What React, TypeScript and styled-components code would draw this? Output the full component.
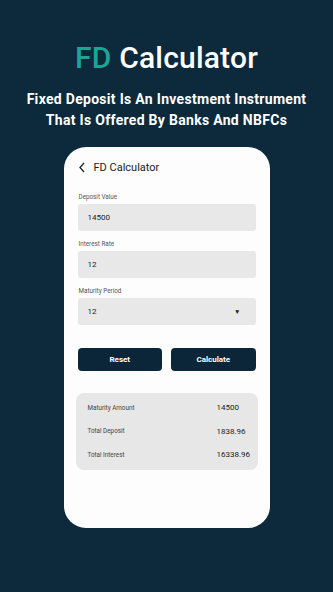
import styled, { createGlobalStyle } from "styled-components";

const GlobalStyle = createGlobalStyle`
  html, body {
    margin: 0;
    padding: 0;
    background: #0c2a3b;
  }
  * {
    box-sizing: border-box;
  }
`;

const Page = styled.div`
  width: 333px;
  height: 592px;
  background: #0c2a3b;
  font-family: Roboto, "Liberation Sans", sans-serif;
  display: flex;
  flex-direction: column;
  align-items: center;
  padding-top: 40px;
  overflow: hidden;
`;

const Title = styled.h1`
  margin: 0;
  font-size: 30px;
  font-weight: 500;
  line-height: 36px;
  color: #ffffff;
  letter-spacing: 0.2px;

  span {
    color: #1ba597;
  }
`;

const Subtitle = styled.p`
  margin: 13px 0 0;
  font-size: 14px;
  font-weight: 700;
  line-height: 21px;
  color: #ffffff;
  text-align: center;
  letter-spacing: 0.3px;
`;

const Phone = styled.div`
  margin-top: 16px;
  width: 206px;
  height: 381px;
  background: #fdfdfd;
  border-radius: 22px;
  padding: 12px 14px 0 14px;
  display: flex;
  flex-direction: column;
`;

const Header = styled.div`
  display: flex;
  align-items: center;
  gap: 8px;
  height: 16px;
  color: #222;
  font-size: 11px;
  margin-bottom: 18px;
`;

const Field = styled.div`
  display: flex;
  flex-direction: column;
  margin-bottom: 9px;
`;

const Label = styled.span`
  font-size: 6.3px;
  color: #555;
  margin-left: 1px;
  line-height: 9px;
  margin-bottom: 2px;
`;

const InputBox = styled.div`
  height: 27px;
  background: #e8e8e8;
  border-radius: 3px;
  display: flex;
  align-items: center;
  justify-content: space-between;
  padding: 0 15px 0 10px;
  font-size: 8px;
  color: #222;
`;

const Caret = styled.span`
  font-size: 6.5px;
  color: #222;
`;

const Buttons = styled.div`
  display: flex;
  gap: 9px;
  margin-top: 14px;
`;

const Button = styled.button`
  flex: 1;
  height: 23px;
  border: none;
  border-radius: 4px;
  background: #0a2638;
  color: #ffffff;
  font-family: Roboto, "Liberation Sans", sans-serif;
  font-size: 8px;
  font-weight: 700;
  padding: 0;
`;

const Results = styled.div`
  margin: 22px -2px 0;
  background: #e7e7e7;
  border-radius: 8px;
  padding: 3px 0 3px 12px;
  display: flex;
  flex-direction: column;
`;

const ResultRow = styled.div`
  display: grid;
  grid-template-columns: 129px 1fr;
  align-items: center;
  height: 23.5px;
`;

const ResultLabel = styled.span`
  font-size: 6.3px;
  color: #444;
`;

const ResultValue = styled.span`
  font-size: 8px;
  color: #222;
`;

const fields = [
  { label: "Deposit Value", value: "14500" },
  { label: "Interest Rate", value: "12" },
  { label: "Maturity Period", value: "12", select: true },
];

const results = [
  { label: "Maturity Amount", value: "14500" },
  { label: "Total Deposit", value: "1838.96" },
  { label: "Total Interest", value: "16338.96" },
];

export default function App() {
  return (
    <Page>
      <GlobalStyle />
      <Title>
        <span>FD</span> Calculator
      </Title>
      <Subtitle>
        Fixed Deposit Is An Investment Instrument
        <br />
        That Is Offered By Banks And NBFCs
      </Subtitle>
      <Phone>
        <Header>
          <svg width="8" height="11" viewBox="0 0 8 11" fill="none">
            <path d="M6 1L2 5.5L6 10" stroke="#222" strokeWidth="1.3" />
          </svg>
          FD Calculator
        </Header>
        {fields.map((f) => (
          <Field key={f.label}>
            <Label>{f.label}</Label>
            <InputBox>
              {f.value}
              {f.select && <Caret>▼</Caret>}
            </InputBox>
          </Field>
        ))}
        <Buttons>
          <Button>Reset</Button>
          <Button>Calculate</Button>
        </Buttons>
        <Results>
          {results.map((r) => (
            <ResultRow key={r.label}>
              <ResultLabel>{r.label}</ResultLabel>
              <ResultValue>{r.value}</ResultValue>
            </ResultRow>
          ))}
        </Results>
      </Phone>
    </Page>
  );
}
